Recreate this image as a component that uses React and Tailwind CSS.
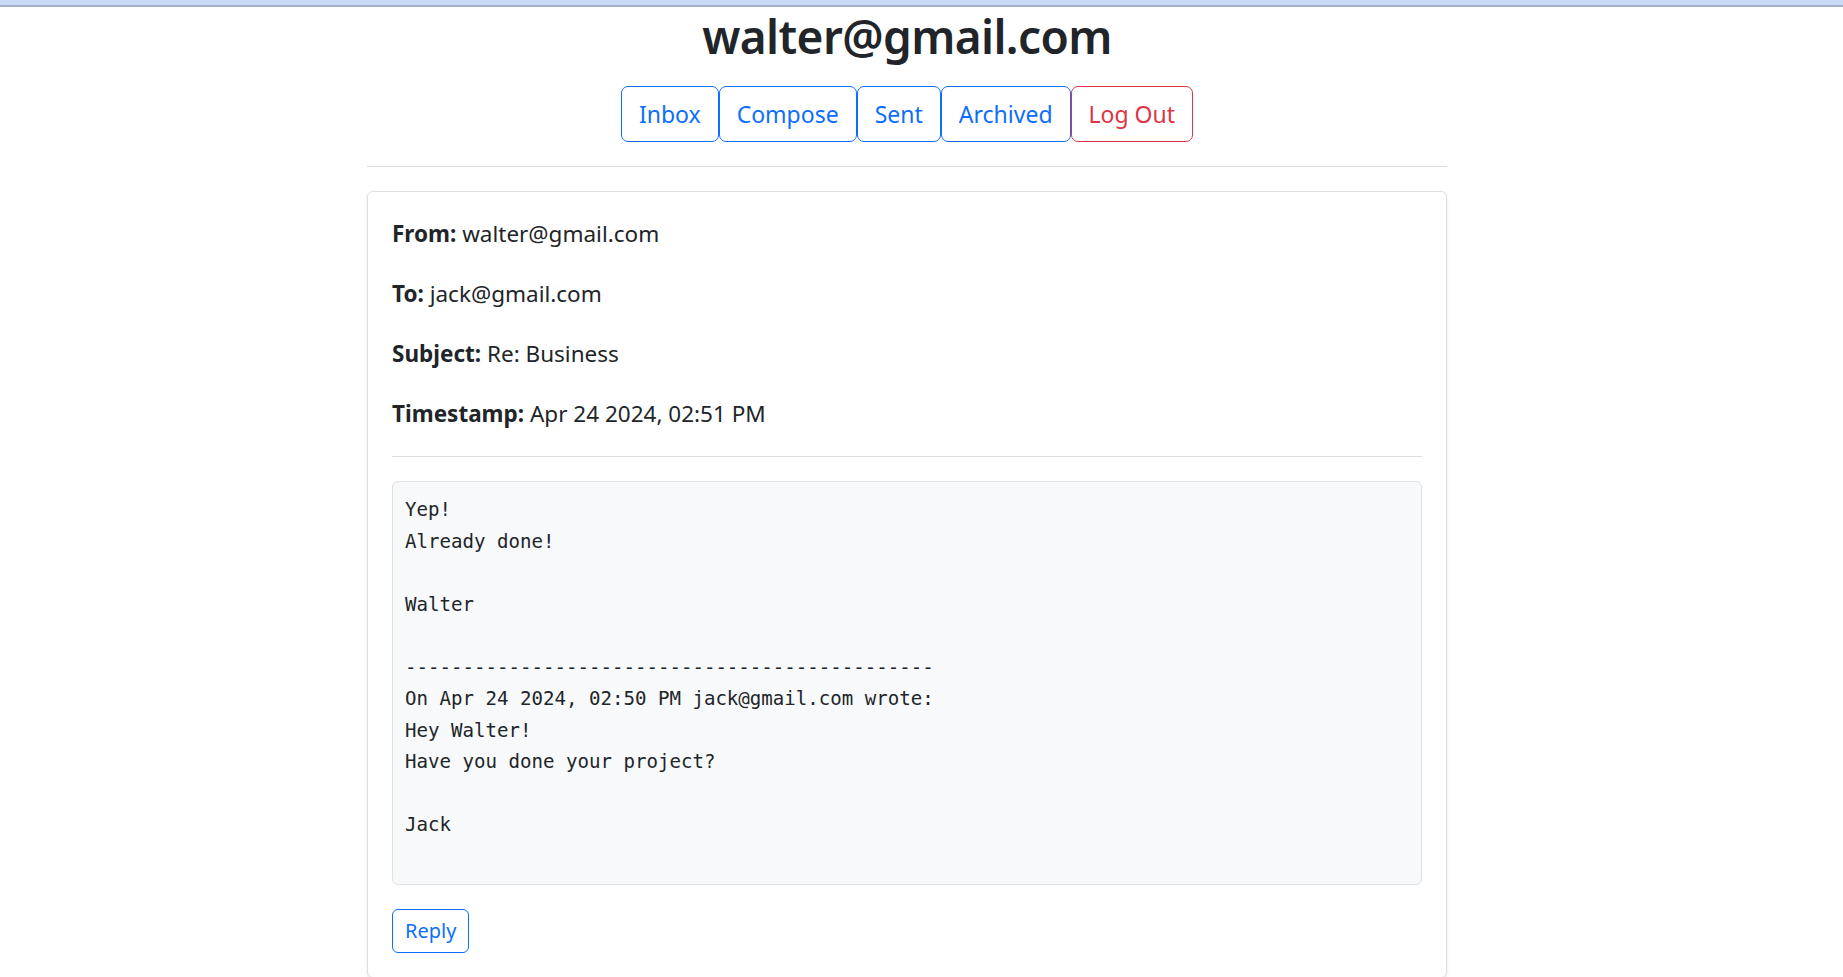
import React from "react";

const sans = { fontFamily: '"Noto Sans", "Open Sans", Arial, sans-serif' };

const navButtons = [
    { label: "Inbox", tone: "blue" },
    { label: "Compose", tone: "blue" },
    { label: "Sent", tone: "blue" },
    { label: "Archived", tone: "blue" },
    { label: "Log Out", tone: "red" },
];

const body = `Yep!
Already done!

Walter

----------------------------------------------
On Apr 24 2024, 02:50 PM jack@gmail.com wrote:
Hey Walter!
Have you done your project?

Jack`;

function Field({ label, value }) {
    return (
        <p className="mb-6 text-[22.5px] leading-[36px] text-[#212529]">
            <strong className="font-bold">{label}:</strong> {value}
        </p>
    );
}

export default function App() {
    return (
        <div className="min-h-screen bg-white text-[#212529]" style={sans}>
            {/* browser strip */}
            <div className="h-[7px] bg-[#c9dbf4] border-b-2 border-[#a4b3cc]" />

            <div className="flex justify-center pr-[29px]">
                <div className="w-[1080px]">
                    {/* Header */}
                    <h2 className="text-center text-[46px] leading-[58px] font-semibold tracking-[-0.6px] mb-[21px]">
                        walter@gmail.com
                    </h2>
                    <div className="flex justify-center">
                        {navButtons.map((b) => (
                            <button
                                key={b.label}
                                className={
                                    b.tone === "red"
                                        ? "px-[17px] py-[9px] text-[23px] leading-[36px] border border-[#dc3545] text-[#dc3545] rounded-[7px] bg-white"
                                        : "px-[17px] py-[9px] text-[23px] leading-[36px] border border-[#0d6efd] text-[#0d6efd] rounded-[7px] bg-white"
                                }
                            >
                                {b.label}
                            </button>
                        ))}
                    </div>
                    <hr className="mt-6 mb-6 border-t border-[#dedede]" />

                    {/* Message card */}
                    <div className="border border-[#dfdfdf] rounded-md shadow-sm p-6">
                        <Field label="From" value="walter@gmail.com" />
                        <Field label="To" value="jack@gmail.com" />
                        <Field label="Subject" value="Re: Business" />
                        <Field label="Timestamp" value="Apr 24 2024, 02:51 PM" />
                        <hr className="mb-6 border-t border-[#dedede]" />
                        <pre
                            className="bg-[#f8f9fa] border border-[#dee2e6] rounded-md px-3 pt-3 pb-[43.5px] text-[19.1px] leading-[31.5px] text-[#212529] mb-6 whitespace-pre"
                            style={{ fontFamily: '"DejaVu Sans Mono", "Liberation Mono", monospace' }}
                        >
                            {body}
                        </pre>
                        <button className="px-3 py-[5px] text-[20px] leading-[32px] border border-[#0d6efd] text-[#0d6efd] rounded-[6px] bg-white">
                            Reply
                        </button>
                    </div>
                </div>
            </div>
        </div>
    );
}
